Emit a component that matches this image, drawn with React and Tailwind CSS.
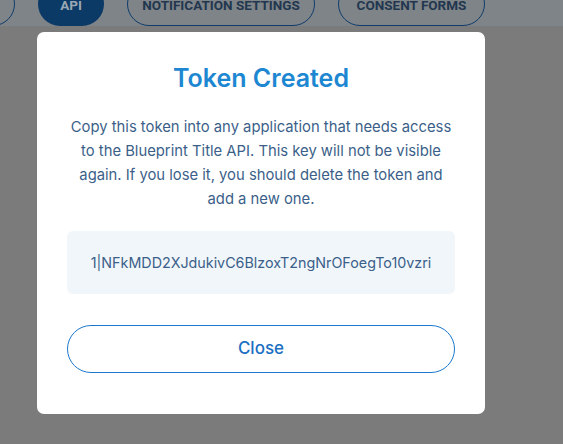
import React from "react";

const tabs = [
  { label: "TOKENS", active: false, w: "w-[120px]" },
  { label: "API", active: true, w: "w-[66px]" },
  { label: "NOTIFICATION SETTINGS", active: false, w: "w-[188px]" },
  { label: "CONSENT FORMS", active: false, w: "w-[147px]" },
];

export default function App() {
  return (
    <div
      className="relative h-[444px] w-[563px] overflow-hidden bg-[#7b7b7b]"
      style={{ fontFamily: "Inter, 'Noto Sans', sans-serif" }}
    >
      {/* page header behind the overlay */}
      <div className="h-[44px] bg-[#7f8488]">
        <div className="ml-[-105px] mt-[-18px] flex gap-[23px] font-['Roboto',sans-serif]">
          {tabs.map((t) => (
            <div
              key={t.label}
              className={
                t.active
                  ? `flex h-[44px] shrink-0 items-center justify-center rounded-full bg-[#0b3a66] pt-[2px] text-[13.5px] font-bold text-[#9aa7b4] ${t.w}`
                  : `flex h-[44px] shrink-0 items-center justify-center rounded-full border border-[#0f3c6b] pt-[2px] text-[13.5px] font-bold text-[#22374f] ${t.w}`
              }
            >
              {t.label}
            </div>
          ))}
        </div>
      </div>

      {/* modal */}
      <div className="absolute left-[37px] top-[32px] w-[448px] rounded-[7px] bg-white px-[30px] pb-[41px] pt-[30px]">
        <h2 className="text-center text-[25px] font-semibold leading-[32px] text-[#1d87d2]">
          Token Created
        </h2>
        <p className="mt-[21px] text-center text-[14.8px] leading-[24px] text-[#3b5f89]">
          Copy this token into any application that needs access to the
          Blueprint Title API. This key will not be visible again. If you lose
          it, you should delete the token and add a new one.
        </p>
        <div className="mt-[20px] flex h-[63px] items-center justify-center rounded-[6px] bg-[#f1f6fb] text-[14.3px] text-[#3b5f89]">
          1|NFkMDD2XJdukivC6BlzoxT2ngNrOFoegTo10vzri
        </div>
        <button className="mt-[31px] flex h-[48px] w-full items-center justify-center rounded-full border border-[#1b78cc] text-[17px] font-medium text-[#1b6fc2]">
          Close
        </button>
      </div>
    </div>
  );
}
